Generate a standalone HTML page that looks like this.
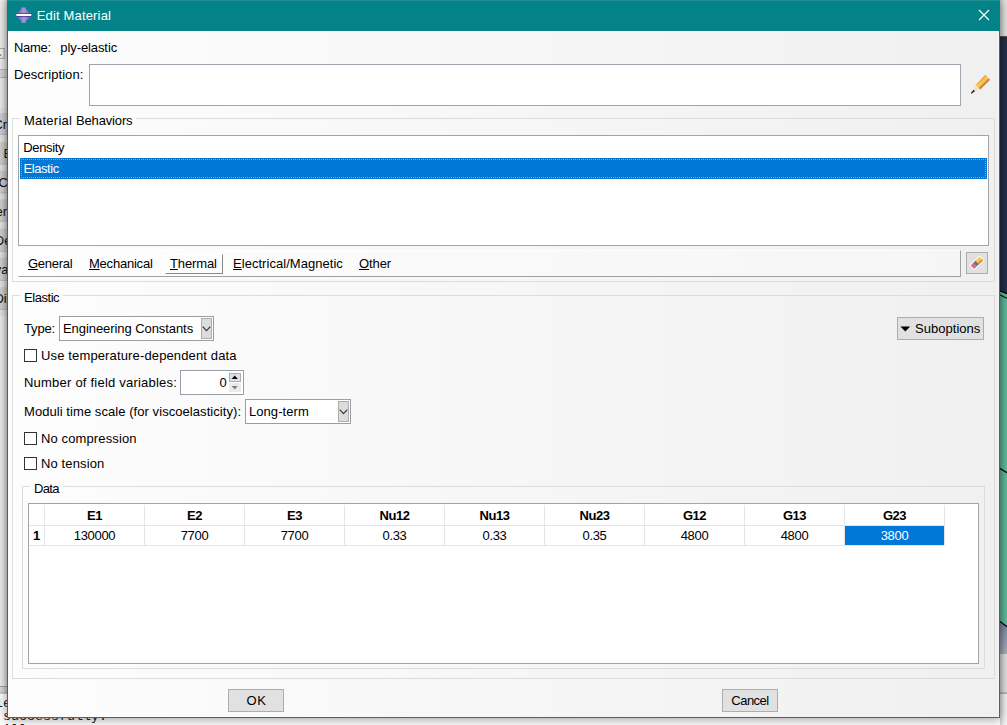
<!DOCTYPE html>
<html lang="en">
<head>
<meta charset="utf-8">
<title>Edit Material</title>
<style>
html,body{margin:0;padding:0;}
body{width:1007px;height:725px;overflow:hidden;position:relative;background:#f0f0f0;
  font-family:"Liberation Sans",sans-serif;font-size:13px;color:#000;}
.a{position:absolute;}
.t{position:absolute;white-space:nowrap;line-height:16px;height:16px;font-size:13px;}
.c{text-align:center;}
u{text-decoration:underline;text-decoration-thickness:1px;text-underline-offset:1px;}
/* background application */
.mono{font-family:"Liberation Mono",monospace;font-size:13.33px;line-height:13px;color:#222;white-space:pre;position:absolute;}
/* dialog */
#dlg{left:7px;top:0;width:993px;height:718px;box-sizing:border-box;border:1px solid #038387;border-top:none;
  background:linear-gradient(to right,#fdfdfd 0,#f0f0f0 100%);box-shadow:0 1px 10px 1px rgba(0,0,0,.36);}
#title{left:7px;top:0;width:993px;height:31px;background:#038387;}
.grp{position:absolute;box-sizing:border-box;border:1px solid #dcdcdc;}
.grpl{position:absolute;white-space:nowrap;line-height:16px;height:16px;padding:0 4px;}
.sunk{position:absolute;box-sizing:border-box;background:#fff;border:1px solid #a3a3ad;}
.btn{position:absolute;box-sizing:border-box;background:#e1e1e1;border:1px solid #adadad;}
.cb{position:absolute;box-sizing:border-box;width:13px;height:13px;background:#fff;border:1px solid #333;}
.combo{position:absolute;box-sizing:border-box;background:#fff;border:1px solid #9c9ca6;height:25px;}
.combo .ar{position:absolute;box-sizing:border-box;right:1px;top:1px;width:11px;height:21px;background:#dcdcdc;border:1px solid #adadad;}
.hl{position:absolute;background:#e5e5e5;}
.th{font-weight:bold;letter-spacing:-0.45px;}
.td{letter-spacing:-0.33px;}
</style>
</head>
<body>
<!-- ===== background application peeking around the dialog ===== -->
<svg id="bgL" class="a" style="left:0;top:0" width="8" height="725" viewBox="0 0 8 725">
<defs><linearGradient id="gsh" x1="0" x2="1" y1="0" y2="0"><stop offset="0" stop-color="#000" stop-opacity="0"/><stop offset=".45" stop-color="#000" stop-opacity=".03"/><stop offset="1" stop-color="#000" stop-opacity=".17"/></linearGradient>
<clipPath id="cpL"><rect x="0" y="0" width="7" height="725"/></clipPath></defs>
<rect x="0" y="0" width="8" height="725" fill="#f0f0f0"/>
<rect x="-2" y="48.5" width="6.2" height="9.8" fill="#f6f6f6" stroke="#a8a8a8" stroke-width="1"/>
<rect x="0" y="54.5" width="1.2" height="1.2" fill="#555"/>
<rect x="0" y="69" width="8" height="9" fill="#d9d9d9"/><rect x="0" y="69" width="8" height="1" fill="#bcbcbc"/><rect x="0" y="77" width="8" height="1" fill="#b4b4b4"/>
<rect x="0" y="78" width="8" height="30" fill="#eeeeee"/>
<rect x="0" y="108" width="8" height="208" fill="#e6e6e6"/>
<rect x="0" y="113" width="8" height="22" fill="#d2d2d2"/>
<rect x="0" y="134" width="8" height="1" fill="#c0c0c0"/>
<rect x="0" y="142" width="8" height="22.5" fill="#d2d2d2"/>
<rect x="0" y="163.5" width="8" height="1" fill="#c0c0c0"/>
<rect x="0" y="170.5" width="8" height="22.8" fill="#d2d2d2"/>
<rect x="0" y="192.3" width="8" height="1" fill="#c0c0c0"/>
<rect x="0" y="199.3" width="8" height="22.3" fill="#d2d2d2"/>
<rect x="0" y="220.6" width="8" height="1" fill="#c0c0c0"/>
<rect x="0" y="228.5" width="8" height="23.3" fill="#d2d2d2"/>
<rect x="0" y="250.8" width="8" height="1" fill="#c0c0c0"/>
<rect x="0" y="257.6" width="8" height="23.2" fill="#d2d2d2"/>
<rect x="0" y="279.8" width="8" height="1" fill="#c0c0c0"/>
<rect x="0" y="287.3" width="8" height="22.5" fill="#d2d2d2"/>
<rect x="0" y="308.8" width="8" height="1" fill="#c0c0c0"/>
<g clip-path="url(#cpL)" font-family="Liberation Sans, sans-serif" font-size="13" fill="#111">
<text x="-6.6" y="128.8">Cr</text>
<text x="3.6" y="157.6">E</text>
<text x="-1.6" y="187">C</text>
<text x="-4.6" y="216.2">er</text>
<text x="-5.2" y="244.8">De</text>
<text x="-5.2" y="273.6">va</text>
<text x="-5.6" y="303.4">Di</text>
</g>
<rect x="0" y="316" width="8" height="371" fill="#efefef"/>
<rect x="0" y="686" width="8" height="1" fill="#a4a4ac"/>
<rect x="0" y="687" width="8" height="6" fill="#dcdcdc"/>
<rect x="0" y="692.6" width="8" height="1" fill="#9c9ca4"/>
<rect x="0" y="693.6" width="8" height="32" fill="#ffffff"/>
<rect x="0" y="0" width="8" height="725" fill="url(#gsh)"/>
</svg>
<svg id="bgR" class="a" style="left:1000px;top:0" width="7" height="725" viewBox="0 0 7 725">
<defs><linearGradient id="gshr" x1="0" x2="1" y1="0" y2="0"><stop offset="0" stop-color="#000" stop-opacity=".15"/><stop offset=".6" stop-color="#000" stop-opacity=".03"/><stop offset="1" stop-color="#000" stop-opacity="0"/></linearGradient>
<linearGradient id="ggb" x1="0" x2="0" y1="0" y2="1"><stop offset="0" stop-color="#7a86a2"/><stop offset="1" stop-color="#a9b1c2"/></linearGradient></defs>
<rect x="0" y="0" width="7" height="36" fill="#e6e6e6"/>
<rect x="0" y="36" width="7" height="1" fill="#555"/>
<rect x="0" y="37" width="7" height="262" fill="#22304a"/>
<polygon points="0,291 7,294 7,725 0,725" fill="#5ebd9e"/>
<path d="M0 290.9 L7 293.7 M0 294.9 L7 298.3" stroke="#000" stroke-width="1.1" fill="none"/>
<polygon points="0,292.1 7,294.9 7,296.9 0,293.7" fill="#5ebd9e"/>
<path d="M0 468.6 L7 472.8" stroke="#000" stroke-width="1.2" fill="none"/>
<polygon points="0,621.5 7,626.7 7,654 0,654" fill="url(#ggb)"/>
<path d="M0 621.5 L7 626.7" stroke="#000" stroke-width="1.2" fill="none"/>
<rect x="0" y="654" width="7" height="39" fill="#e4e4e4"/>
<rect x="0" y="692.6" width="7" height="1" fill="#8c8c94"/>
<rect x="0" y="693.6" width="7" height="32" fill="#f6f6f6"/>
<rect x="0" y="0" width="7" height="725" fill="url(#gshr)"/>
</svg>

<div id="bgB" class="a" style="left:0;top:694px;width:1000px;height:31px;background:#fff;overflow:hidden">
<div class="mono" style="left:-13px;top:2.8px">ile</div>
<div class="mono" style="left:3px;top:15.8px">successfully.</div>
<div class="mono" style="left:3px;top:28.8px">All</div>
</div>

<!-- ===== dialog ===== -->
<div id="dlg" class="a"></div>
<div id="title" class="a"></div>
<div class="a" style="left:7px;top:0;width:993px;height:1px;background:#1f8f93"></div>
<div class="a" style="left:8px;top:31px;width:991px;height:1px;background:#fff"></div>
<div class="a" style="left:998px;top:31px;width:1px;height:686px;background:#fbf6f6"></div>

<!-- title icon -->
<svg class="a" style="left:14px;top:5px" width="20" height="20" viewBox="0 0 20 20">
  <defs><linearGradient id="gi" x1="0" x2="1" y1="0" y2="0">
    <stop offset="0" stop-color="#6553ac"/><stop offset=".5" stop-color="#a69cd3"/><stop offset="1" stop-color="#6553ac"/></linearGradient></defs>
  <polygon points="7.2,2.4 11.8,2.4 11.8,4.2 17,8.2 17,12.2 11.8,15.8 11.8,17.8 7.2,17.8 7.2,15.8 2.6,12.2 2.6,8.2 7.2,4.2" fill="url(#gi)"/>
  <rect x="2.6" y="8.3" width="14.4" height="0.8" fill="#4a3596"/>
  <rect x="2.6" y="11" width="14.4" height="0.8" fill="#4a3596"/>
  <rect x="2.4" y="9" width="14.8" height="2" fill="#fff"/>
</svg>
<div class="t" id="ttl" style="letter-spacing:0.167px;left:36.7px;top:8px;color:#fff">Edit Material</div>
<!-- close X -->
<svg class="a" style="left:978px;top:9px" width="12" height="12" viewBox="0 0 12 12">
  <path d="M1 1 L11 11 M11 1 L1 11" stroke="#fff" stroke-width="1.2" fill="none"/>
</svg>

<!-- name / description -->
<div class="t" id="nameL" style="letter-spacing:-0.325px;left:14px;top:40px">Name:</div>
<div class="t" id="nameV" style="letter-spacing:-0.090px;left:60.3px;top:40px">ply-elastic</div>
<div class="t" id="descL" style="letter-spacing:0.060px;left:14px;top:67px">Description:</div>
<div class="sunk" style="left:89px;top:64px;width:872px;height:42px"></div>
<!-- pencil icon -->
<svg class="a" style="left:968px;top:72px" width="26" height="26" viewBox="0 0 26 26">
  <defs><linearGradient id="gp" gradientUnits="userSpaceOnUse" x1="12.4" y1="7.8" x2="17.2" y2="12.8">
    <stop offset="0" stop-color="#ee9a2e"/><stop offset=".18" stop-color="#f4b040"/><stop offset=".42" stop-color="#f2d468"/><stop offset=".62" stop-color="#eab050"/><stop offset=".8" stop-color="#d88840"/><stop offset="1" stop-color="#a85a28"/></linearGradient></defs>
  <polygon points="17.4,2.8 22,7.7 12.1,17.6 7.7,13" fill="url(#gp)"/>
  <polygon points="7.7,13 12.1,17.6 4.6,19.9" fill="#fbdcc0"/>
  <polygon points="5.7,17.8 6.9,19.3 3,22 3.3,20.2" fill="#222"/>
</svg>

<!-- Material Behaviors group -->
<div class="grp" style="left:12px;top:118px;width:983px;height:164px"></div>
<div class="grpl" id="mbL" style="letter-spacing:0.030px;left:20px;top:113px;background:#fcfcfc"><span style="letter-spacing:0.23px">Material </span><span style="letter-spacing:-0.14px">Behaviors</span></div>
<div class="sunk" style="left:18px;top:135px;width:971px;height:111px"></div>
<div class="t" id="dens" style="letter-spacing:-0.350px;left:23.3px;top:140px">Density</div>
<div class="a" style="left:20px;top:158px;width:967px;height:21px;background:#0078d7"></div>
<div class="a" style="left:21px;top:159px;width:965px;height:1px;background:repeating-linear-gradient(to right,#ff8728 0,#ff8728 1px,transparent 1px,transparent 2px)"></div>
<div class="a" style="left:21px;top:177px;width:965px;height:1px;background:repeating-linear-gradient(to right,#ff8728 0,#ff8728 1px,transparent 1px,transparent 2px)"></div>
<div class="a" style="left:21px;top:159px;width:1px;height:19px;background:repeating-linear-gradient(to bottom,#ff8728 0,#ff8728 1px,transparent 1px,transparent 2px)"></div>
<div class="a" style="left:985px;top:159px;width:1px;height:19px;background:repeating-linear-gradient(to bottom,#ff8728 0,#ff8728 1px,transparent 1px,transparent 2px)"></div>
<div class="t" id="elasSel" style="letter-spacing:-0.450px;left:23.6px;top:161px;color:#fff">Elastic</div>

<!-- menu bar -->
<div class="a" style="left:18px;top:250px;width:943px;height:27px;box-sizing:border-box;border-top:1px solid #fff;border-left:1px solid #fff;border-right:1px solid #a0a0a0;border-bottom:1px solid #a0a0a0;background:rgba(255,255,255,.35)"></div>
<div class="a" style="left:165px;top:254px;width:58px;height:20px;box-sizing:border-box;border-top:1px solid #fff;border-left:1px solid #fff;border-right:1px solid #8a8a8a;border-bottom:1px solid #8a8a8a"></div>
<div class="t" id="mGen" style="letter-spacing:-0.280px;left:28px;top:256px"><u>G</u>eneral</div>
<div class="t" id="mMech" style="letter-spacing:-0.220px;left:89px;top:256px"><u>M</u>echanical</div>
<div class="t" id="mTherm" style="letter-spacing:-0.130px;left:170px;top:256px"><u>T</u>hermal</div>
<div class="t" id="mElec" style="letter-spacing:0.040px;left:233px;top:256px"><u>E</u>lectrical/Magnetic</div>
<div class="t" id="mOther" style="letter-spacing:-0.100px;left:359px;top:256px"><u>O</u>ther</div>
<!-- eraser button -->
<div class="btn" style="left:966px;top:252px;width:22px;height:22px"></div>
<svg class="a" style="left:966px;top:252px" width="22" height="22" viewBox="0 0 22 22">
  <g transform="translate(10.8,10.9) rotate(-44)">
    <rect x="-7.2" y="-3.4" width="14.4" height="6.8" rx="1.2" fill="#fff"/>
    <rect x="-6.3" y="-2.5" width="4.4" height="5" rx="1" fill="#d8708c"/>
    <rect x="-2.3" y="-2.5" width="3.1" height="5" fill="#6c757c"/>
    <rect x="0.8" y="-2.5" width="5.5" height="5" fill="#f2b040"/>
    <rect x="0.8" y="-1.6" width="5.5" height="1.6" fill="#f5d668"/>
    <rect x="0.8" y="1.5" width="5.5" height="1" fill="#c8783a"/>
  </g>
</svg>

<!-- Elastic group -->
<div class="grp" style="left:12px;top:295px;width:983px;height:384px"></div>
<div class="grpl" id="elL" style="letter-spacing:-0.450px;left:20px;top:290px;background:#fcfcfc">Elastic</div>
<div class="t" id="typeL" style="letter-spacing:-0.170px;left:24px;top:321px">Type:</div>
<div class="combo" style="left:59px;top:316px;width:155px">
  <div class="ar"><svg width="9" height="19" viewBox="0 0 9 19" style="position:absolute;left:0;top:0"><path d="M0.7 7.7 L4.5 11.6 L8.3 7.7" stroke="#333" stroke-width="1.15" fill="none"/></svg></div>
</div>
<div class="t" id="typeV" style="letter-spacing:-0.070px;left:63px;top:321px">Engineering Constants</div>
<!-- Suboptions -->
<div class="btn" style="left:897px;top:317px;width:87px;height:23px"></div>
<svg class="a" style="left:900px;top:326px" width="11" height="6" viewBox="0 0 11 6"><polygon points="0.4,0.4 10.2,0.4 5.3,5.4" fill="#000"/></svg>
<div class="t" id="subo" style="letter-spacing:0.030px;left:915px;top:321px">Suboptions</div>

<div class="cb" style="left:24px;top:349px"></div>
<div class="t" id="useT" style="letter-spacing:0.140px;left:41px;top:348px">Use temperature-dependent data</div>

<div class="t" id="nfv" style="letter-spacing:0.220px;left:24px;top:375px">Number of field variables:</div>
<div class="a" style="left:180px;top:370px;width:64px;height:25px;box-sizing:border-box;background:#fff;border:1px solid #9c9ca6"></div>
<div class="t" id="zero" style="left:219.5px;top:375px">0</div>
<div class="btn" style="left:229px;top:373px;width:12px;height:9px"></div>
<svg class="a" style="left:231px;top:375px" width="8" height="4" viewBox="0 0 8 4"><polygon points="0.6,3.9 6.8,3.9 3.7,0.6" fill="#000"/></svg>
<div class="a" style="left:229px;top:383px;width:12px;height:9px;background:#ebebeb"></div>
<svg class="a" style="left:231px;top:386px" width="8" height="4" viewBox="0 0 8 4"><polygon points="0.6,0.1 6.8,0.1 3.7,3.4" fill="#808080"/></svg>

<div class="t" id="mod" style="letter-spacing:0.064px;left:24px;top:404px">Moduli time scale (for viscoelasticity):</div>
<div class="combo" style="left:245px;top:399px;width:106px">
  <div class="ar"><svg width="9" height="19" viewBox="0 0 9 19" style="position:absolute;left:0;top:0"><path d="M0.7 7.7 L4.5 11.6 L8.3 7.7" stroke="#333" stroke-width="1.15" fill="none"/></svg></div>
</div>
<div class="t" id="longT" style="letter-spacing:0.060px;left:249px;top:404px">Long-term</div>

<div class="cb" style="left:24px;top:432px"></div>
<div class="t" id="noC" style="letter-spacing:0.120px;left:41px;top:431px">No compression</div>
<div class="cb" style="left:24px;top:457px"></div>
<div class="t" id="noT" style="letter-spacing:0.120px;left:41px;top:456px">No tension</div>

<!-- Data group -->
<div class="grp" style="left:22px;top:486px;width:963px;height:183px"></div>
<div class="grpl" id="dataL" style="letter-spacing:-0.670px;left:30px;top:481px;background:#fcfcfc">Data</div>
<div class="sunk" style="left:28px;top:503px;width:951px;height:161px"></div>
<!-- table grid -->
<div class="hl" style="left:29px;top:525px;width:915px;height:1px"></div>
<div class="hl" style="left:29px;top:545px;width:915px;height:1px"></div>
<div class="hl" style="left:44px;top:505px;width:1px;height:40px"></div>
<div class="hl" style="left:144px;top:505px;width:1px;height:40px"></div>
<div class="hl" style="left:244px;top:505px;width:1px;height:40px"></div>
<div class="hl" style="left:344px;top:505px;width:1px;height:40px"></div>
<div class="hl" style="left:444px;top:505px;width:1px;height:40px"></div>
<div class="hl" style="left:544px;top:505px;width:1px;height:40px"></div>
<div class="hl" style="left:644px;top:505px;width:1px;height:40px"></div>
<div class="hl" style="left:744px;top:505px;width:1px;height:40px"></div>
<div class="hl" style="left:844px;top:505px;width:1px;height:40px"></div>
<div class="hl" style="left:944px;top:505px;width:1px;height:40px"></div>
<div class="a" style="left:845px;top:526px;width:99px;height:19px;background:#0078d7"></div>
<div class="t c th" style="left:45px;top:508px;width:99px">E1</div>
<div class="t c th" style="left:145px;top:508px;width:99px">E2</div>
<div class="t c th" style="left:245px;top:508px;width:99px">E3</div>
<div class="t c th" style="left:345px;top:508px;width:99px">Nu12</div>
<div class="t c th" style="left:445px;top:508px;width:99px">Nu13</div>
<div class="t c th" style="left:545px;top:508px;width:99px">Nu23</div>
<div class="t c th" style="left:645px;top:508px;width:99px">G12</div>
<div class="t c th" style="left:745px;top:508px;width:99px">G13</div>
<div class="t c th" style="left:845px;top:508px;width:99px">G23</div>
<div class="t c th" style="left:29px;top:528px;width:15px">1</div>
<div class="t c td" style="left:45px;top:528px;width:99px">130000</div>
<div class="t c td" style="left:145px;top:528px;width:99px">7700</div>
<div class="t c td" style="left:245px;top:528px;width:99px">7700</div>
<div class="t c td" style="left:345px;top:528px;width:99px">0.33</div>
<div class="t c td" style="left:445px;top:528px;width:99px">0.33</div>
<div class="t c td" style="left:545px;top:528px;width:99px">0.35</div>
<div class="t c td" style="left:645px;top:528px;width:99px">4800</div>
<div class="t c td" style="left:745px;top:528px;width:99px">4800</div>
<div class="t c td" style="left:845px;top:528px;width:99px;color:#fff">3800</div>

<!-- buttons -->
<div class="btn" style="left:228px;top:689px;width:56px;height:23px"></div>
<div class="t c" id="okB" style="letter-spacing:0.700px;left:228.5px;top:693px;width:56px">OK</div>
<div class="btn" style="left:722px;top:689px;width:56px;height:23px"></div>
<div class="t c" id="cancelB" style="letter-spacing:-0.500px;left:722px;top:693px;width:56px">Cancel</div>

</body>
</html>
